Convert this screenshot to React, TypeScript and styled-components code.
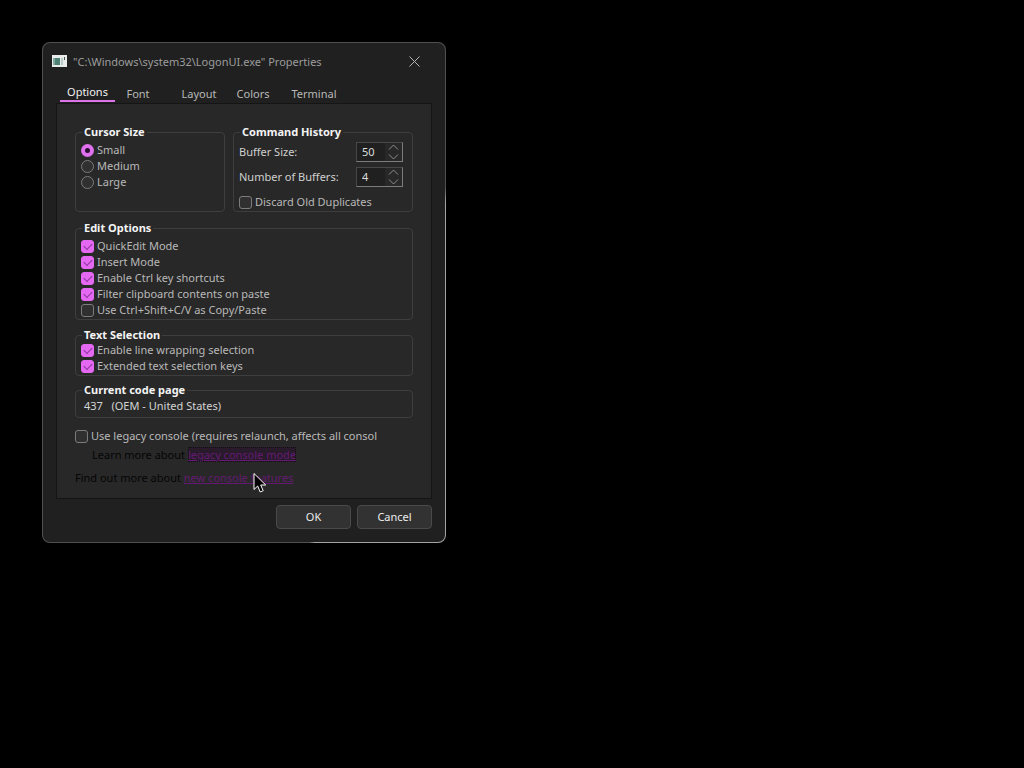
import React from "react";
import styled, { createGlobalStyle, css } from "styled-components";

const GlobalStyle = createGlobalStyle`
  * { box-sizing: border-box; }
  body {
    margin: 0;
    background: #000;
    color: #c8c8c8;
    font: 11px/16px "Noto Sans", "Open Sans", sans-serif;
  }
  button, input { font: inherit; color: inherit; }
`;

const Desktop = styled.main`
  position: relative;
  min-height: 100vh;
  padding: 42px;
`;

const Dialog = styled.section`
  width: 100%;
  max-width: 404px;
  padding: 0 13px 13px;
  border: 1px solid transparent;
  border-radius: 8px;
  background:
    linear-gradient(#202020, #202020) padding-box,
    linear-gradient(111deg, #505050 77%, #a4a4a4 78%) border-box;
`;

const TitleBar = styled.header`
  display: flex;
  align-items: center;
  height: 36px;
  margin: 0 -4px;
  gap: 6px;
`;

const Title = styled.h1`
  flex: 1;
  margin: 0;
  padding-top: 2px;
  font-size: 11px;
  font-weight: 400;
  color: #9c9c9c;
`;

const CloseButton = styled.button`
  display: flex;
  padding: 0;
  margin-right: 16px;
  border: 0;
  background: none;
  color: #b4b4b4;
`;

const TabList = styled.nav`
  display: flex;
  height: 24px;
  padding-left: 4px;
`;

const Tab = styled.button<{ $active?: boolean }>`
  height: 24px;
  padding: 6px 0 0;
  margin-right: 1px;
  width: ${(p) => (p.$active ? 55 : 54)}px;
  border: 0;
  background: none;
  color: #b8b8b8;
  white-space: nowrap;
  ${(p) =>
    p.$active &&
    css`
      height: 23px;
      padding: 4px 0 0;
      margin-right: -4px;
      color: #f0f0f0;
      border-bottom: 2px solid #dc74e8;
    `}
`;

const WideTab = styled(Tab)`
  width: 66px;
  margin-right: -6px;
`;

const Panel = styled.div`
  display: flex;
  flex-direction: column;
  padding: 21px 18px 12px;
  border: 1px solid #151515;
  background: #282828;
`;

const GroupRow = styled.div`
  display: grid;
  grid-template-columns: 150fr 180fr;
  gap: 8px;
`;

const Group = styled.fieldset<{ $top?: number; $gap?: number }>`
  min-width: 0;
  margin: ${(p) => p.$gap ?? 0}px 0 0;
  padding: ${(p) => p.$top ?? 0}px 5px 1px;
  border: 1px solid #3e3e3e;
  border-radius: 4px;
`;

const Legend = styled.legend`
  margin-left: 1px;
  padding: 0 2px;
  line-height: 14px;
  font-weight: 700;
  color: #f4f4f4;
`;

const Option = styled.label`
  display: flex;
  align-items: center;
  gap: 3px;
  height: 16px;
  color: #b8b8b8;
  white-space: nowrap;
`;

const mark = css`
  appearance: none;
  display: grid;
  place-items: center;
  flex: none;
  width: 13px;
  height: 13px;
  margin: 0;
  border: 1px solid #7c7c7c;
  background: #303030;
`;

const Radio = styled.input`
  ${mark}
  border-radius: 50%;
  &:checked {
    border: 4px solid #e070ee;
    background: #2a1030;
  }
`;

const Checkbox = styled.input`
  ${mark}
  border-radius: 3px;
  &:checked {
    border-color: #e468f2;
    background: #e468f2;
  }
  &:checked::after {
    content: "";
    width: 7px;
    height: 4px;
    border: solid #8a3498;
    border-width: 0 0 1px 1px;
    transform: translateY(-1px) rotate(-45deg);
  }
`;

const Fields = styled.div`
  display: grid;
  gap: 5px;
  margin: 0 4px 7px 0;
`;

const Field = styled.div`
  display: flex;
  align-items: center;
  justify-content: space-between;
  height: 20px;
  color: #d0d0d0;
`;

const Spinner = styled.div`
  display: flex;
  width: 47px;
  height: 20px;
  border: 1px solid #484848;
  border-right-color: #7c7c7c;
  border-bottom-color: #7c7c7c;
  background: #202020;
`;

const SpinnerInput = styled.input`
  width: 28px;
  min-width: 0;
  padding: 0 0 0 5px;
  border: 0;
  background: none;
  color: #dcdcdc;
`;

const SpinnerButtons = styled.div`
  display: flex;
  flex: 1;
  flex-direction: column;
  background: #282828;
`;

const SpinnerButton = styled.button`
  display: grid;
  flex: 1;
  place-items: center;
  padding: 0;
  border: 0;
  background: none;
  color: #8c8c8c;
`;

const CodePage = styled.p`
  margin: 0;
  padding: 1px 3px 2px;
  color: #d4d4d4;
  white-space: pre;
`;

const Legacy = styled.div`
  margin-top: 10px;
`;

const Note = styled.p<{ $indent?: boolean }>`
  margin: ${(p) => (p.$indent ? "3px 0 7px 17px" : "0")};
  color: #050505;
`;

const NoteLink = styled.a<{ $focused?: boolean }>`
  color: #641a72;
  ${(p) =>
    p.$focused &&
    css`
      background: #291a2c;
      outline: 1px dotted #101010;
      outline-offset: -1px;
    `}
`;

const Actions = styled.footer`
  display: flex;
  justify-content: flex-end;
  gap: 6px;
  margin-top: 6px;
`;

const ActionButton = styled.button`
  width: 75px;
  height: 24px;
  padding: 0;
  border: 1px solid #4a4a4a;
  border-radius: 4px;
  background: #323232;
  color: #ececec;
`;

const Pointer = styled.svg`
  position: absolute;
  left: 253px;
  top: 472px;
  pointer-events: none;
`;

function NumberField({ id, label, value }: { id: string; label: string; value: string }) {
  return (
    <Field>
      <label htmlFor={id}>{label}</label>
      <Spinner>
        <SpinnerInput id={id} defaultValue={value} />
        <SpinnerButtons>
          {["M1 5.5 5.5 1 10 5.5", "M1 1.5 5.5 6 10 1.5"].map((d, i) => (
            <SpinnerButton key={d} type="button" aria-label={(i ? "Decrease " : "Increase ") + label}>
              <svg width="11" height="7" fill="none" stroke="currentColor">
                <path d={d} />
              </svg>
            </SpinnerButton>
          ))}
        </SpinnerButtons>
      </Spinner>
    </Field>
  );
}

function Check({ label, checked }: { label: string; checked?: boolean }) {
  return (
    <Option>
      <Checkbox type="checkbox" defaultChecked={checked} />
      {label}
    </Option>
  );
}

export default function App() {
  return (
    <>
      <GlobalStyle />
      <Desktop>
        <Dialog role="dialog" aria-labelledby="title">
          <TitleBar>
            <svg width="15" height="13" viewBox="0 0 15 13">
              <path fill="#e8eceb" d="M0 0h15v12H0z" />
              <path fill="#4f8277" d="M1 3h7v7H1z" />
              <path fill="#86aaa0" d="M1 3h2v7H1z" />
              <path fill="#b9c9c5" d="M9 3h2v7H9z" />
              <path fill="#4c5552" d="M12 2h1v3h-1z" />
            </svg>
            <Title id="title">"C:\Windows\system32\LogonUI.exe" Properties</Title>
            <CloseButton type="button" aria-label="Close">
              <svg width="11" height="11" fill="none" stroke="currentColor">
                <path d="M.5.5l10 10M10.500.5l-10 10" />
              </svg>
            </CloseButton>
          </TitleBar>
          <TabList role="tablist">
            <Tab $active role="tab" aria-selected="true">Options</Tab>
            <Tab role="tab">Font</Tab>
            <WideTab role="tab">Layout</WideTab>
            <Tab role="tab">Colors</Tab>
            <WideTab role="tab">Terminal</WideTab>
          </TabList>
          <Panel>
            <GroupRow>
              <Group $top={3}>
                <Legend>Cursor Size</Legend>
                {["Small", "Medium", "Large"].map((size, i) => (
                  <Option key={size}>
                    <Radio type="radio" name="cursor" defaultChecked={i === 0} />
                    {size}
                  </Option>
                ))}
              </Group>
              <Group $top={3}>
                <Legend>Command History</Legend>
                <Fields>
                  <NumberField id="buffer-size" label="Buffer Size:" value="50" />
                  <NumberField id="buffer-count" label="Number of Buffers:" value="4" />
                </Fields>
                <Check label="Discard Old Duplicates" />
              </Group>
            </GroupRow>
            <Group $top={3} $gap={9}>
              <Legend>Edit Options</Legend>
              <Check label="QuickEdit Mode" checked />
              <Check label="Insert Mode" checked />
              <Check label="Enable Ctrl key shortcuts" checked />
              <Check label="Filter clipboard contents on paste" checked />
              <Check label="Use Ctrl+Shift+C/V as Copy/Paste" />
            </Group>
            <Group $gap={8}>
              <Legend>Text Selection</Legend>
              <Check label="Enable line wrapping selection" checked />
              <Check label="Extended text selection keys" checked />
            </Group>
            <Group $gap={7}>
              <Legend>Current code page</Legend>
              <CodePage>437   (OEM - United States)</CodePage>
            </Group>
            <Legacy>
              <Check label="Use legacy console (requires relaunch, affects all consol" />
              <Note $indent>
                Learn more about <NoteLink href="#legacy" $focused>legacy console mode</NoteLink>
              </Note>
              <Note>
                Find out more about <NoteLink href="#features">new console features</NoteLink>
              </Note>
            </Legacy>
          </Panel>
          <Actions>
            <ActionButton type="button">OK</ActionButton>
            <ActionButton type="button">Cancel</ActionButton>
          </Actions>
        </Dialog>
        <Pointer width="14" height="22" viewBox="0 0 14 22" aria-hidden="true">
          <path
            d="M1 1.500v16l3.700-3.500 2.500 6 3-1.300-2.500-5.700h5z"
            fill="#000"
            stroke="#fff"
            strokeLinejoin="round"
          />
        </Pointer>
      </Desktop>
    </>
  );
}
